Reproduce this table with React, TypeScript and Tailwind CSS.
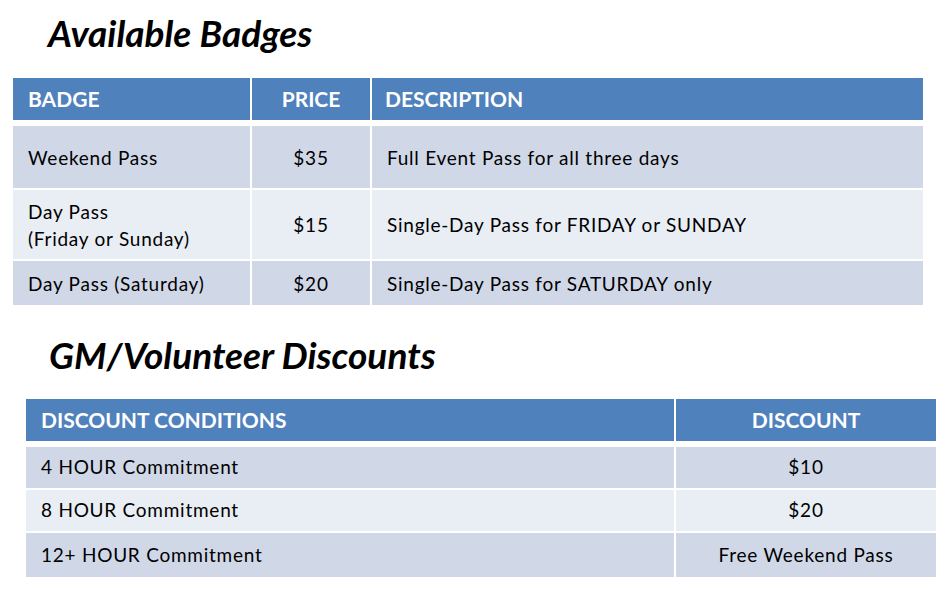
const badges = [
  { name: ['Weekend Pass'], price: '$35', desc: 'Full Event Pass for all three days', h: 'h-[62px]', bg: 'bg-[#d0d8e8]' },
  { name: ['Day Pass', '(Friday or Sunday)'], price: '$15', desc: 'Single-Day Pass for FRIDAY or SUNDAY', h: 'h-[69px]', bg: 'bg-[#e9edf4]' },
  { name: ['Day Pass (Saturday)'], price: '$20', desc: 'Single-Day Pass for SATURDAY only', h: 'h-[44px]', bg: 'bg-[#d0d8e8]' },
]

const discounts = [
  { cond: '4 HOUR Commitment', value: '$10', h: 'h-[41px]', bg: 'bg-[#d0d8e8]' },
  { cond: '8 HOUR Commitment', value: '$20', h: 'h-[41px]', bg: 'bg-[#e9edf4]' },
  { cond: '12+ HOUR Commitment', value: 'Free Weekend Pass', h: 'h-[44px]', bg: 'bg-[#d0d8e8]' },
]

const App = (): JSX.Element => {
  return (
    <div className="h-[589px] w-[950px] overflow-hidden bg-white font-['Lato',sans-serif] text-black">
      <h1 className="pl-[48px] pt-[13px] text-[37px] leading-[40px] font-bold italic">Available Badges</h1>

      <div className="ml-[13px] mt-[25px] flex w-[910px] flex-col gap-y-[2px]">
        <div className="mb-[4px] grid h-[42px] grid-cols-[237px_118px_1fr] gap-x-[2px] text-[21px] font-bold text-white">
          <div className="flex items-center bg-[#4f81bd] pl-[15px]">BADGE</div>
          <div className="flex items-center justify-center bg-[#4f81bd]">PRICE</div>
          <div className="flex items-center bg-[#4f81bd] pl-[13px]">DESCRIPTION</div>
        </div>
        {badges.map((b) => (
          <div key={b.price} className={`grid grid-cols-[237px_118px_1fr] gap-x-[2px] text-[19px] leading-[27px] tracking-[0.75px] ${b.h}`}>
            <div className={`flex flex-col justify-center pl-[15px] ${b.bg}`}>
              {b.name.map((line) => (
                <span key={line}>{line}</span>
              ))}
            </div>
            <div className={`flex items-center justify-center ${b.bg}`}>{b.price}</div>
            <div className={`flex items-center pl-[15px] ${b.bg}`}>{b.desc}</div>
          </div>
        ))}
      </div>

      <h2 className="pl-[49px] pt-[30px] text-[37px] leading-[40px] font-bold italic">GM/Volunteer Discounts</h2>

      <div className="ml-[26px] mt-[24px] flex w-[910px] flex-col gap-y-[2px]">
        <div className="mb-[4px] grid h-[42px] grid-cols-[648px_1fr] gap-x-[2px] text-[21px] font-bold text-white">
          <div className="flex items-center bg-[#4f81bd] pl-[15px]">DISCOUNT CONDITIONS</div>
          <div className="flex items-center justify-center bg-[#4f81bd]">DISCOUNT</div>
        </div>
        {discounts.map((d) => (
          <div key={d.cond} className={`grid grid-cols-[648px_1fr] gap-x-[2px] text-[19px] tracking-[0.75px] ${d.h}`}>
            <div className={`flex items-center pl-[15px] ${d.bg}`}>{d.cond}</div>
            <div className={`flex items-center justify-center ${d.bg}`}>{d.value}</div>
          </div>
        ))}
      </div>
    </div>
  )
}

export default App
